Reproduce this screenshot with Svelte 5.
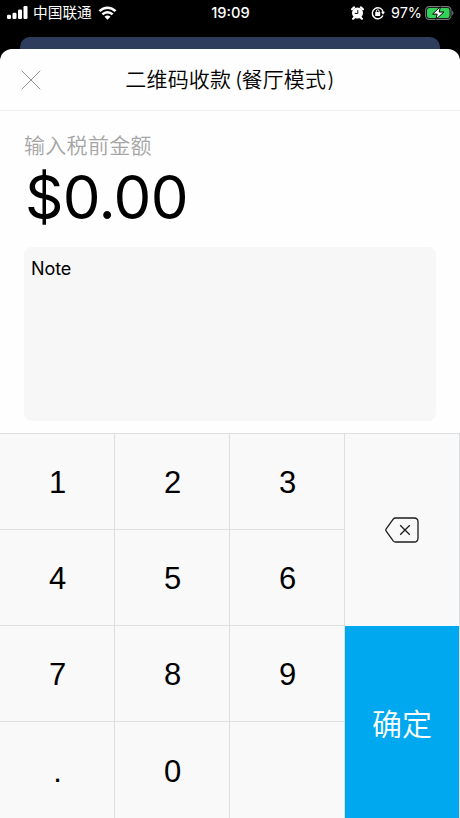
<script lang="ts">
  const digits = ["1", "2", "3", "4", "5", "6", "7", "8", "9", ".", "0", ""];

  let cents = $state("");
  let note = $state("Note");
  let amount = $derived((Number(cents) / 100).toFixed(2));

  function press(key: string) {
    if (key === "" || key === "." || cents.length > 7) return;
    cents += key;
  }

  function erase() {
    cents = cents.slice(0, -1);
  }
</script>

<div class="screen">
  <header class="status-bar">
    <div class="status-left">
      <svg class="signal" width="21" height="13" viewBox="0 0 21 13" fill="#fff">
        <rect x="0" y="8.8" width="4" height="4.2" rx="1.2" />
        <rect x="5.5" y="6.8" width="4" height="6.2" rx="1.2" />
        <rect x="11" y="3.5" width="4" height="9.5" rx="1.2" />
        <rect x="16.5" y="0" width="4" height="13" rx="1.2" />
      </svg>
      <span class="carrier">中国联通</span>
      <svg class="wifi" width="19" height="14" viewBox="0 0 18 14" fill="none" stroke="#fff">
        <path d="M1 5.2C5.6 .6 12.4 .6 17 5.2" stroke-width="2.6" />
        <path d="M3.9 8.4C6.8 5.5 11.2 5.5 14.1 8.4" stroke-width="2.5" />
        <path d="M9 13.8L6 10.8C7.8 9.100 10.200 9.100 12 10.800Z" fill="#fff" stroke="none" />
      </svg>
    </div>
    <span class="time">19:09</span>
    <div class="status-right">
      <svg class="alarm" width="13" height="14" viewBox="0 0 13 14">
        <circle cx="6.5" cy="7" r="5.5" fill="#fff" />
        <path d="M1.100 3.200L3.100 1.400M11.900 3.200L9.900 1.400M2.100 12.700L3.700 11.200M10.900 12.700L9.300 11.200" stroke="#fff" stroke-width="2.200" stroke-linecap="round" />
        <path d="M6.800 4.200V7.400H3.800" fill="none" stroke="#000" stroke-width="1" />
      </svg>
      <svg class="lock" width="14" height="14" viewBox="0 0 14 14" fill="none" stroke="#fff">
        <path d="M11.900 9.400A5.500 5.500 0 1 1 12.200 6" stroke-width="1.400" />
        <path d="M10 5.700H14L12 8.700Z" fill="#fff" stroke="none" />
        <rect x="4.200" y="6" width="5" height="4" rx=".5" fill="#fff" stroke="none" />
        <path d="M5.300 6.400V5.200a1.400 1.400 0 0 1 2.800 0V6.400" stroke-width="1" />
      </svg>
      <span class="percent">97%</span>
      <svg class="battery" width="29" height="14" viewBox="0 0 29 14">
        <rect x=".6" y=".6" width="25.400" height="12.800" rx="3.600" fill="none" stroke="#777" stroke-width="1.100" />
        <path d="M27.200 4.700c1.600 .6 1.600 4 0 4.600z" fill="#777" />
        <rect x="2" y="2" width="22.600" height="10" rx="2.200" fill="#32d158" />
        <path d="M15.400 .6L7.600 8.100H12.200L10.800 13.400L19 6H14.200Z" fill="#fff" stroke="#000" stroke-width="1" />
      </svg>
    </div>
  </header>

  <div class="back-card"></div>

  <main class="sheet">
    <div class="title-bar">
      <button class="close" aria-label="关闭">
        <svg width="20" height="20" viewBox="0 0 20 20" stroke="#929292" stroke-width="1">
          <path d="M.7 .7L19.3 19.3M19.3 .7L.7 19.3" />
        </svg>
      </button>
      <h1>二维码收款<span class="open">(</span>餐厅模式<span class="shut">)</span></h1>
    </div>

    <section class="entry">
      <div class="label">输入税前金额</div>
      <div class="amount">${amount}</div>
      <textarea class="note" aria-label="Note" bind:value={note}></textarea>
    </section>

    <section class="keypad">
      <div class="digits">
        {#each digits as key}
          <button class="key" onclick={() => press(key)}>{key}</button>
        {/each}
      </div>
      <div class="actions">
        <button class="erase" aria-label="删除" onclick={erase}>
          <svg width="34" height="26" viewBox="0 0 34 26" fill="none" stroke="#1c1c1c" stroke-width="1.3" stroke-linejoin="round">
            <path d="M10.5 1H29.5a3.5 3.5 0 0 1 3.5 3.5V21.5a3.5 3.5 0 0 1-3.5 3.5H10.5Q9.2 25 8.2 23.8L1.2 14.2Q.4 13 1.2 11.8L8.2 2.2Q9.2 1 10.5 1Z" />
            <path d="M15.2 8.2L24.8 17.8M24.8 8.2L15.2 17.8" />
          </svg>
        </button>
        <button class="confirm">确定</button>
      </div>
    </section>
  </main>
</div>

<style>
  :global(body) {
    background: #000;
  }

  .screen {
    width: 460px;
    height: 818px;
    display: flex;
    flex-direction: column;
    overflow: hidden;
    background: #000;
    font-family: Inter, "Noto Sans CJK SC", sans-serif;
  }

  button {
    border: none;
    padding: 0;
    margin: 0;
    background: none;
    font-family: inherit;
    color: inherit;
  }

  .status-bar {
    height: 37px;
    flex: none;
    box-sizing: border-box;
    padding: 0 6px 12px 7px;
    display: grid;
    grid-template-columns: 1fr auto 1fr;
    align-items: center;
    color: #fff;
    font-size: 14.7px;
    line-height: 24px;
    font-weight: 500;
  }

  .status-left,
  .status-right {
    display: flex;
    align-items: center;
  }

  .status-right {
    justify-content: flex-end;
  }

  .carrier {
    margin: 0 6px 0 5px;
    font-weight: 400;
  }

  .lock {
    margin: 0 6px 0 7px;
  }

  .percent {
    margin-right: 3px;
    font-size: 14.4px;
    font-weight: 400;
  }

  .back-card {
    height: 12px;
    flex: none;
    margin: 0 20px;
    background: #2d3d5b;
    border-radius: 10px 10px 0 0;
  }

  .sheet {
    flex: 1;
    min-height: 0;
    display: flex;
    flex-direction: column;
    background: #fefefe;
    border-radius: 12px 12px 0 0;
    overflow: hidden;
  }

  .title-bar {
    height: 62px;
    flex: none;
    box-sizing: border-box;
    padding: 1px 21px 0;
    border-bottom: 1px solid #efefef;
    display: grid;
    grid-template-columns: 20px 1fr 20px;
    align-items: center;
  }

  .close {
    height: 20px;
  }

  .close svg,
  .erase svg {
    display: block;
  }

  h1 {
    margin: 0;
    text-align: center;
    font-size: 21px;
    line-height: 30px;
    font-weight: 350;
    letter-spacing: 0.15px;
    color: #000;
  }

  .open {
    margin-left: 4px;
    margin-right: -1px;
  }

  .shut {
    margin-left: 1px;
  }

  .entry {
    flex: 1;
    padding: 20px 24px 12px;
    display: flex;
    flex-direction: column;
  }

  .label {
    font-size: 21px;
    line-height: 30px;
    font-weight: 350;
    letter-spacing: 0.3px;
    color: #a5a5a5;
  }

  .amount {
    height: 86px;
    padding-left: 1px;
    font-size: 60px;
    line-height: 72px;
    letter-spacing: -0.7px;
    color: #000;
  }

  .note {
    flex: 1;
    box-sizing: border-box;
    width: 100%;
    padding: 11px 7px 9px;
    border: none;
    border-radius: 8px;
    outline: none;
    resize: none;
    background: #f7f7f7;
    color: #000;
    font-family: inherit;
    font-size: 18px;
    line-height: 22px;
    letter-spacing: -0.1px;
  }

  .keypad {
    height: 385px;
    flex: none;
    box-sizing: border-box;
    border-top: 1px solid #dcdfe1;
    display: flex;
    background: #f9f9f9;
  }

  .digits {
    width: 345px;
    display: grid;
    grid-template-columns: repeat(3, 1fr);
    grid-template-rows: repeat(4, 1fr);
  }

  .key {
    padding: 3px 0 0 1px;
    border-right: 1px solid #dcdfe2;
    border-bottom: 1px solid #dfe2e5;
    font-family: "Liberation Sans", Arial, sans-serif;
    font-size: 31px;
    color: #000;
  }

  .key:nth-child(n + 10) {
    border-bottom: none;
  }

  .actions {
    flex: 1;
    display: grid;
    grid-template-rows: 1fr 1fr;
    border-right: 1px solid #dcdfe2;
  }

  .erase,
  .confirm {
    display: flex;
    align-items: center;
    justify-content: center;
  }

  .confirm {
    background: #00a9ef;
    color: #fff;
    font-size: 30px;
    font-weight: 350;
  }
</style>
